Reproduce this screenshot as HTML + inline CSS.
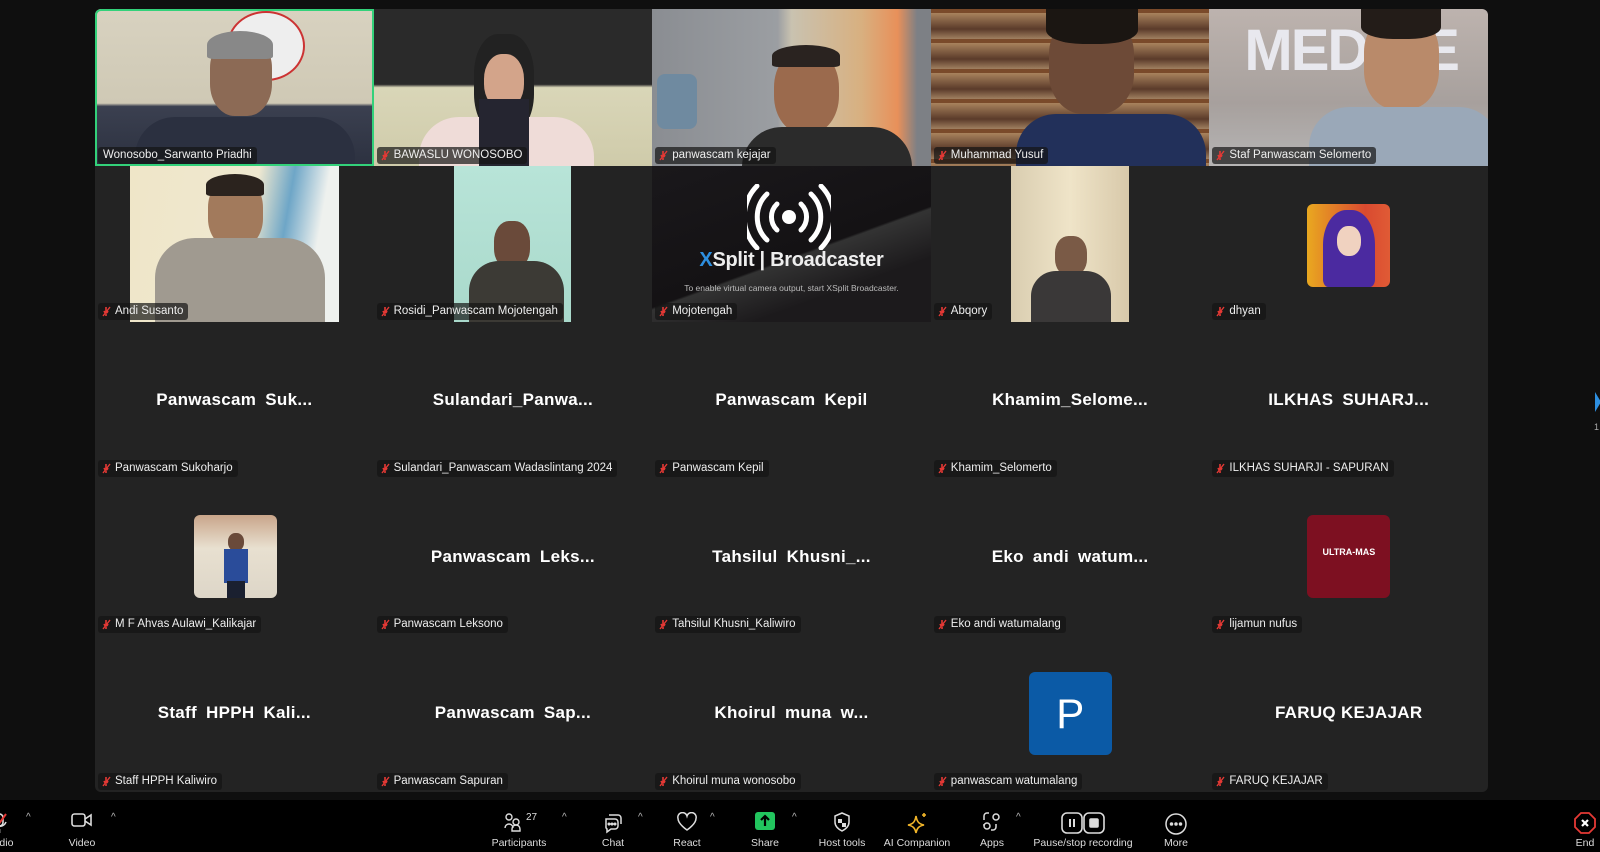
<!DOCTYPE html>
<html><head><meta charset="utf-8"><style>
*{margin:0;padding:0;box-sizing:border-box}
body{width:1600px;height:852px;background:#0f0f0f;overflow:hidden;font-family:"Liberation Sans",sans-serif;position:relative}
.grid{position:absolute;left:95px;top:9px;width:1393px;height:783px;background:#232323;border-radius:6px;overflow:hidden}
.t{position:absolute;width:278.6px;height:156.6px;overflow:hidden}
.v{position:absolute;top:0;bottom:0}
.lab{position:absolute;left:3px;bottom:2px;height:17px;background:rgba(20,20,20,.7);border-radius:3px;color:#eee;font-size:11.5px;line-height:17px;padding:0 5px 0 17px;white-space:nowrap}
.lab svg{position:absolute;left:4px;top:3px}
.nm{position:absolute;left:0;right:0;top:68px;text-align:center;color:#fff;font-weight:bold;font-size:17px;letter-spacing:.3px;word-spacing:4px}
.av{position:absolute;border-radius:6px}
.tb{position:absolute;left:0;top:800px;width:1600px;height:52px;background:#000}
.btn{position:absolute;top:0;height:52px;text-align:center;color:#ddd;font-size:10.5px}
.btn .l{position:absolute;top:37px;left:50%;transform:translateX(-50%);white-space:nowrap}
.btn svg{position:absolute;top:12px;left:50%;transform:translateX(-50%)}
.car{position:absolute;top:12px;color:#bbb;font-size:10px}
</style></head><body>
<svg width="0" height="0" style="position:absolute"><defs><g id="m"><path d="M4 1v5M2 5q2 4 4 0M4 8v2" stroke="#e53935" stroke-width="1.6" fill="none"/><path d="M1 10L8 1" stroke="#e53935" stroke-width="1.4"/></g></defs></svg>
<div class="grid">
<!-- row1 -->
<div class="t" style="left:0;top:0;background:linear-gradient(180deg,#d8d2c0 0%,#cfc9b5 60%,#3b4050 62%,#2c3140 100%)">
 <div style="position:absolute;left:132px;top:2px;width:78px;height:70px;border-radius:50%;background:#eee;border:2px solid #c33"></div>
 <div style="position:absolute;left:115px;top:27px;width:62px;height:80px;border-radius:40%;background:#8c6a55"></div>
 <div style="position:absolute;left:112px;top:22px;width:66px;height:28px;border-radius:50% 50% 10% 10%;background:#888"></div>
 <div style="position:absolute;left:40px;top:108px;width:220px;height:60px;border-radius:40px 40px 0 0;background:#2b3040"></div>
 <div style="position:absolute;inset:0;border:2px solid #33d17a;border-radius:6px 0 0 0"></div>
 <div class="lab" style="padding-left:5px">Wonosobo_Sarwanto Priadhi</div></div>
<div class="t" style="left:278.6px;top:0;background:linear-gradient(180deg,#2a2a2a 0,#2a2a2a 48%,#d9d6b8 50%,#cfcbaa 100%)">
 <div style="position:absolute;left:100px;top:25px;width:60px;height:100px;border-radius:40%;background:#222"></div>
 <div style="position:absolute;left:110px;top:45px;width:40px;height:55px;border-radius:45%;background:#d3a48a"></div>
 <div style="position:absolute;left:45px;top:108px;width:175px;height:60px;border-radius:40px 40px 0 0;background:#efdcd8"></div>
 <div style="position:absolute;left:105px;top:90px;width:50px;height:70px;background:#252530"></div>
 <div class="lab"><svg width="10" height="11"><use href="#m"/></svg>BAWASLU WONOSOBO</div></div>
<div class="t" style="left:557.2px;top:0;background:linear-gradient(90deg,#8a8d92 0,#9b9ea2 45%,#c9c2b0 50%,#d8b080 75%,#e8905a 88%,#7d8085 95%)">
 <div style="position:absolute;left:122px;top:40px;width:65px;height:85px;border-radius:45%;background:#9b6a4d"></div>
 <div style="position:absolute;left:120px;top:36px;width:68px;height:22px;border-radius:50% 50% 10% 10%;background:#2a2320"></div>
 <div style="position:absolute;left:90px;top:118px;width:170px;height:50px;border-radius:40px 40px 0 0;background:#2b2b2b"></div>
 <div style="position:absolute;left:5px;top:65px;width:40px;height:55px;border-radius:8px;background:#6f8aa0"></div>
 <div class="lab"><svg width="10" height="11"><use href="#m"/></svg>panwascam kejajar</div></div>
<div class="t" style="left:835.8px;top:0;background:repeating-linear-gradient(180deg,#7a4a2a 0,#7a4a2a 4px,#a9835d 4px,#5b3b2a 20px,#a08060 30px)">
 <div style="position:absolute;left:118px;top:5px;width:85px;height:100px;border-radius:40%;background:#6d4a37"></div>
 <div style="position:absolute;left:115px;top:0;width:92px;height:35px;border-radius:0 0 40% 40%;background:#1b1612"></div>
 <div style="position:absolute;left:85px;top:105px;width:190px;height:60px;border-radius:40px 40px 0 0;background:#22305a"></div>
 <div class="lab"><svg width="10" height="11"><use href="#m"/></svg>Muhammad Yusuf</div></div>
<div class="t" style="left:1114.4px;top:0;background:linear-gradient(180deg,#bdb3ae,#a7a09d 60%,#b6b5b5)">
 <div style="position:absolute;left:35px;top:8px;font:bold 58px 'Liberation Sans';color:#e8e8ee;letter-spacing:-2px">MED  CE</div>
 <div style="position:absolute;left:155px;top:5px;width:75px;height:95px;border-radius:40%;background:#b98a6a"></div>
 <div style="position:absolute;left:152px;top:0;width:80px;height:30px;border-radius:0 0 40% 40%;background:#231c18"></div>
 <div style="position:absolute;left:100px;top:98px;width:190px;height:70px;border-radius:40px 40px 0 0;background:#9aa8b8"></div>
 <div class="lab"><svg width="10" height="11"><use href="#m"/></svg>Staf Panwascam Selomerto</div></div>
<!-- row2 -->
<div class="t" style="left:0;top:156.6px">
 <div class="v" style="left:35px;width:209px;background:linear-gradient(100deg,#efe6c8 0,#efe8d0 55%,#6ea6c7 70%,#eef1ee 85%)">
  <div style="position:absolute;left:78px;top:12px;width:55px;height:70px;border-radius:42%;background:#a27a5c"></div>
  <div style="position:absolute;left:76px;top:8px;width:58px;height:22px;border-radius:50% 50% 10% 10%;background:#2b231e"></div>
  <div style="position:absolute;left:25px;top:72px;width:170px;height:90px;border-radius:40px 40px 0 0;background:#a09a90"></div></div>
 <div class="lab"><svg width="10" height="11"><use href="#m"/></svg>Andi Susanto</div></div>
<div class="t" style="left:278.6px;top:156.6px">
 <div class="v" style="left:80px;width:117px;background:linear-gradient(180deg,#b8e4d8,#a9d9cb)">
  <div style="position:absolute;left:40px;top:55px;width:36px;height:48px;border-radius:42%;background:#6a4a3a"></div>
  <div style="position:absolute;left:15px;top:95px;width:95px;height:70px;border-radius:30px 30px 0 0;background:#3c3a35"></div></div>
 <div class="lab"><svg width="10" height="11"><use href="#m"/></svg>Rosidi_Panwascam Mojotengah</div></div>
<div class="t" style="left:557.2px;top:156.6px;background:linear-gradient(160deg,#1a181b 0,#141214 55%,#333 56%,#1c1a1c 75%)">
 <svg style="position:absolute;left:95px;top:18px" width="84" height="66" viewBox="0 0 84 66" fill="none" stroke="#fff" stroke-width="5" stroke-linecap="round"><circle cx="42" cy="33" r="7" fill="#fff" stroke="none"/><path d="M30 20a18 18 0 0 0 0 26M54 20a18 18 0 0 1 0 26M20 10a32 32 0 0 0 0 46M64 10a32 32 0 0 1 0 46M10 2a44 44 0 0 0 0 62M74 2a44 44 0 0 1 0 62"/></svg>
 <div style="position:absolute;left:0;right:0;top:83px;text-align:center;color:#eee;font-weight:bold;font-size:20px;letter-spacing:-.3px"><span style="color:#2d8fe0">X</span>Split | Broadcaster</div>
 <div style="position:absolute;left:0;right:0;top:117px;text-align:center;color:#bbb;font-size:8.5px">To enable virtual camera output, start XSplit Broadcaster.</div>
 <div class="lab"><svg width="10" height="11"><use href="#m"/></svg>Mojotengah</div></div>
<div class="t" style="left:835.8px;top:156.6px">
 <div class="v" style="left:80px;width:118px;background:linear-gradient(90deg,#d9cdb0,#efe4c8 50%,#d8c9aa)">
  <div style="position:absolute;left:44px;top:70px;width:32px;height:40px;border-radius:42%;background:#7a5a46"></div>
  <div style="position:absolute;left:20px;top:105px;width:80px;height:60px;border-radius:25px 25px 0 0;background:#3a3838"></div></div>
 <div class="lab"><svg width="10" height="11"><use href="#m"/></svg>Abqory</div></div>
<div class="t" style="left:1114.4px;top:156.6px">
 <div class="av" style="left:98px;top:38px;width:83px;height:83px;background:linear-gradient(90deg,#e9a820,#d94a30 70%,#e05b35)">
  <div style="position:absolute;left:16px;top:6px;width:52px;height:77px;border-radius:45% 45% 10% 10%;background:#4b2aa0"></div>
  <div style="position:absolute;left:30px;top:22px;width:24px;height:30px;border-radius:45%;background:#f0d2c0"></div></div>
 <div class="lab"><svg width="10" height="11"><use href="#m"/></svg>dhyan</div></div>
<!-- row3 -->
<div class="t" style="left:0;top:313.2px"><div class="nm">Panwascam Suk...</div><div class="lab"><svg width="10" height="11"><use href="#m"/></svg>Panwascam Sukoharjo</div></div>
<div class="t" style="left:278.6px;top:313.2px"><div class="nm">Sulandari_Panwa...</div><div class="lab"><svg width="10" height="11"><use href="#m"/></svg>Sulandari_Panwascam Wadaslintang 2024</div></div>
<div class="t" style="left:557.2px;top:313.2px"><div class="nm">Panwascam Kepil</div><div class="lab"><svg width="10" height="11"><use href="#m"/></svg>Panwascam Kepil</div></div>
<div class="t" style="left:835.8px;top:313.2px"><div class="nm">Khamim_Selome...</div><div class="lab"><svg width="10" height="11"><use href="#m"/></svg>Khamim_Selomerto</div></div>
<div class="t" style="left:1114.4px;top:313.2px"><div class="nm">ILKHAS SUHARJ...</div><div class="lab"><svg width="10" height="11"><use href="#m"/></svg>ILKHAS SUHARJI - SAPURAN</div></div>
<!-- row4 -->
<div class="t" style="left:0;top:469.8px">
 <div class="av" style="left:99px;top:36px;width:83px;height:83px;background:linear-gradient(180deg,#c9a58a,#e8e0d0 40%,#ddd6c8)">
  <div style="position:absolute;left:34px;top:18px;width:16px;height:18px;border-radius:45%;background:#6a4a3a"></div>
  <div style="position:absolute;left:30px;top:34px;width:24px;height:34px;background:#2a4c9a"></div>
  <div style="position:absolute;left:33px;top:66px;width:18px;height:17px;background:#1a2030"></div></div>
 <div class="lab"><svg width="10" height="11"><use href="#m"/></svg>M F Ahvas Aulawi_Kalikajar</div></div>
<div class="t" style="left:278.6px;top:469.8px"><div class="nm">Panwascam Leks...</div><div class="lab"><svg width="10" height="11"><use href="#m"/></svg>Panwascam Leksono</div></div>
<div class="t" style="left:557.2px;top:469.8px"><div class="nm">Tahsilul Khusni_...</div><div class="lab"><svg width="10" height="11"><use href="#m"/></svg>Tahsilul Khusni_Kaliwiro</div></div>
<div class="t" style="left:835.8px;top:469.8px"><div class="nm">Eko andi watum...</div><div class="lab"><svg width="10" height="11"><use href="#m"/></svg>Eko andi watumalang</div></div>
<div class="t" style="left:1114.4px;top:469.8px">
 <div class="av" style="left:98px;top:36px;width:83px;height:83px;background:#7d1021;color:#fff;font:bold 9px 'Liberation Sans';text-align:center;line-height:74px">ULTRA-MAS</div>
 <div class="lab"><svg width="10" height="11"><use href="#m"/></svg>lijamun nufus</div></div>
<!-- row5 -->
<div class="t" style="left:0;top:626.4px"><div class="nm">Staff HPPH Kali...</div><div class="lab"><svg width="10" height="11"><use href="#m"/></svg>Staff HPPH Kaliwiro</div></div>
<div class="t" style="left:278.6px;top:626.4px"><div class="nm">Panwascam Sap...</div><div class="lab"><svg width="10" height="11"><use href="#m"/></svg>Panwascam Sapuran</div></div>
<div class="t" style="left:557.2px;top:626.4px"><div class="nm">Khoirul muna w...</div><div class="lab"><svg width="10" height="11"><use href="#m"/></svg>Khoirul muna wonosobo</div></div>
<div class="t" style="left:835.8px;top:626.4px">
 <div class="av" style="left:98px;top:37px;width:83px;height:83px;background:#0b5aa6;color:#fff;font-size:42px;text-align:center;line-height:83px">P</div>
 <div class="lab"><svg width="10" height="11"><use href="#m"/></svg>panwascam watumalang</div></div>
<div class="t" style="left:1114.4px;top:626.4px"><div class="nm" style="word-spacing:0">FARUQ KEJAJAR</div><div class="lab"><svg width="10" height="11"><use href="#m"/></svg>FARUQ KEJAJAR</div></div>
</div>
<div style="position:absolute;left:1595px;top:392px;width:0;height:0;border-top:10px solid transparent;border-bottom:10px solid transparent;border-left:6px solid #2d8fe0"></div>
<div style="position:absolute;left:1594px;top:422px;color:#aaa;font-size:9px">1</div>
<div class="tb">
 <div class="btn" style="left:-20px;width:40px"><svg width="20" height="22" viewBox="0 0 20 22" fill="none" stroke="#ddd" stroke-width="1.6"><rect x="6" y="2" width="7" height="12" rx="3.5"/><path d="M3 10a7 7 0 0 0 13 0M9.5 17v4"/><path d="M3 20L16 2" stroke="#e53935" stroke-width="2"/></svg><span class="l">Audio</span></div>
 <div class="car" style="left:26px">^</div>
 <div class="btn" style="left:62px;width:40px"><svg width="22" height="16" viewBox="0 0 22 16" fill="none" stroke="#ddd" stroke-width="1.6"><rect x="1" y="2" width="13" height="12" rx="2.5"/><path d="M14 7l6-4v10l-6-4"/></svg><span class="l">Video</span></div>
 <div class="car" style="left:111px">^</div>
 <div class="btn" style="left:497px;width:50px"><svg width="36" height="20" viewBox="0 0 36 20" fill="none" stroke="#ddd" stroke-width="1.4"><circle cx="5" cy="5" r="3"/><circle cx="12" cy="10" r="3"/><path d="M1 16a4 4 0 0 1 8 0M8 19v-2a4 4 0 0 1 8 0v2z"/><text x="22" y="8" fill="#ddd" stroke="none" font-size="10" font-family="Liberation Sans">27</text></svg><span class="l" style="left:22px">Participants</span></div>
 <div class="car" style="left:562px">^</div>
 <div class="btn" style="left:598px;width:30px"><svg width="20" height="22" viewBox="0 0 20 22" fill="none" stroke="#ddd" stroke-width="1.5"><path d="M6 3h9a3 3 0 0 1 3 3v6"/><path d="M3 7h9a3 3 0 0 1 3 3v4a3 3 0 0 1-3 3H8l-4 3v-3a3 3 0 0 1-1-3z"/><circle cx="6" cy="12" r=".8" fill="#ddd"/><circle cx="9" cy="12" r=".8" fill="#ddd"/><circle cx="12" cy="12" r=".8" fill="#ddd"/></svg><span class="l">Chat</span></div>
 <div class="car" style="left:638px">^</div>
 <div class="btn" style="left:672px;width:30px"><svg width="22" height="20" viewBox="0 0 22 20" fill="none" stroke="#ddd" stroke-width="1.5"><path d="M11 18S2 12 2 6.5A4.5 4.5 0 0 1 11 4a4.5 4.5 0 0 1 9 2.5C20 12 11 18 11 18z"/></svg><span class="l">React</span></div>
 <div class="car" style="left:710px">^</div>
 <div class="btn" style="left:750px;width:30px"><svg width="20" height="18" viewBox="0 0 20 18"><rect x="0" y="0" width="20" height="18" rx="3" fill="#22c55e"/><path d="M10 14V5M6 8l4-4 4 4" stroke="#000" stroke-width="2.2" fill="none"/></svg><span class="l">Share</span></div>
 <div class="car" style="left:792px">^</div>
 <div class="btn" style="left:822px;width:40px"><svg width="18" height="20" viewBox="0 0 18 20" fill="none" stroke="#ddd" stroke-width="1.5"><path d="M9 1l7 3v6c0 4-3 7-7 9-4-2-7-5-7-9V4z"/><path d="M5 7h4v4H5zM9 11h4v4H9z" fill="#ddd" stroke="none"/></svg><span class="l">Host tools</span></div>
 <div class="btn" style="left:897px;width:40px"><svg width="22" height="22" viewBox="0 0 22 22" fill="none" stroke="#f0b429" stroke-width="1.6"><path d="M10 4c1 6 3 8 8 9-5 1-7 3-8 8-1-5-3-7-8-8 5-1 7-3 8-9z"/><path d="M18 1v4M16 3h4"/></svg><span class="l">AI Companion</span></div>
 <div class="btn" style="left:977px;width:30px"><svg width="20" height="20" viewBox="0 0 20 20" fill="none" stroke="#ddd" stroke-width="1.5"><path d="M2 8V4a3 3 0 0 1 3-3h2M2 12v2M14 12v3a3 3 0 0 1-3 3H9"/><circle cx="14" cy="5" r="3"/><circle cx="5" cy="14" r="3"/></svg><span class="l">Apps</span></div>
 <div class="car" style="left:1016px">^</div>
 <div class="btn" style="left:1043px;width:80px"><svg width="44" height="22" viewBox="0 0 44 22" fill="none" stroke="#ddd" stroke-width="1.6"><rect x="1" y="1" width="20" height="20" rx="5"/><rect x="23" y="1" width="20" height="20" rx="5"/><path d="M9 7v8M13 7v8" stroke-width="2"/><rect x="29" y="7" width="8" height="8" rx="1" fill="#ddd"/></svg><span class="l">Pause/stop recording</span></div>
 <div class="btn" style="left:1161px;width:30px"><svg width="24" height="24" viewBox="0 0 24 24" fill="none" stroke="#ddd" stroke-width="1.5"><circle cx="12" cy="12" r="10"/><circle cx="7.5" cy="12" r="1" fill="#ddd"/><circle cx="12" cy="12" r="1" fill="#ddd"/><circle cx="16.5" cy="12" r="1" fill="#ddd"/></svg><span class="l">More</span></div>
 <div class="btn" style="left:1570px;width:30px"><svg width="22" height="22" viewBox="0 0 22 22"><path d="M7 1h8l6 6v8l-6 6H7l-6-6V7z" fill="none" stroke="#e53935" stroke-width="1.8"/><path d="M8 8l6 6M14 8l-6 6" stroke="#fff" stroke-width="2.2"/></svg><span class="l">End</span></div>
</div>
</body></html>
